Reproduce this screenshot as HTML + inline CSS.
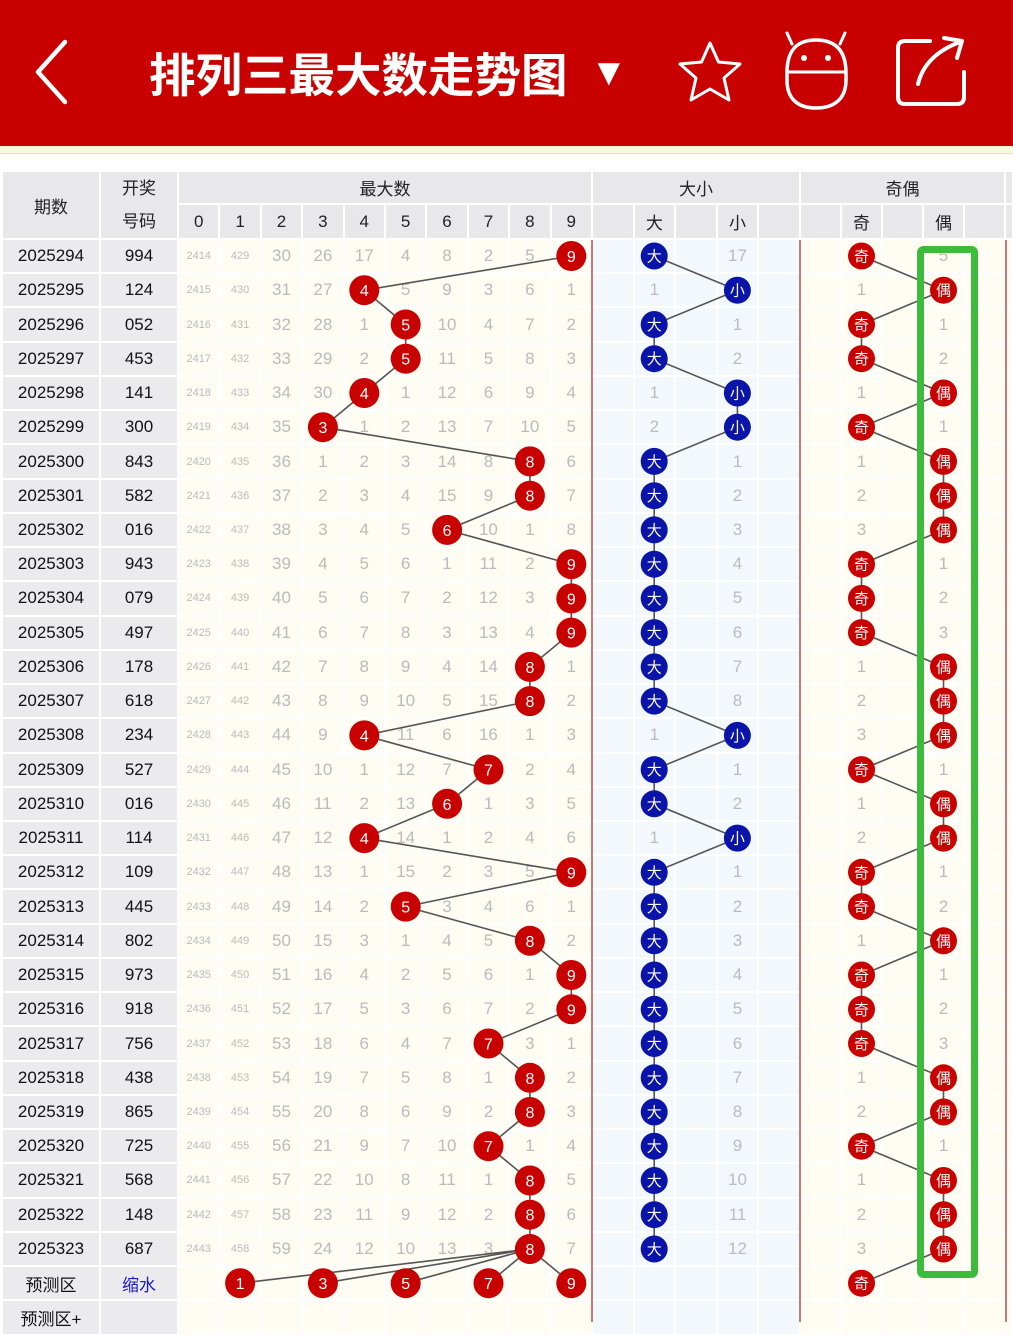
<!DOCTYPE html>
<html><head><meta charset="utf-8"><style>
*{margin:0;padding:0;box-sizing:border-box}
body{width:1013px;height:1322px;overflow:hidden;background:#fff;font-family:"Liberation Sans","Noto Sans CJK SC",sans-serif;position:relative}
#hd{position:absolute;left:0;top:0;width:1013px;height:146px;background:#c90000}
#st{position:absolute;left:0;top:146px;width:1013px;height:8px;background:#fdf6e2;border-bottom:1px solid #eadfc0}
#tt{position:absolute;left:149px;top:42px;color:#fff;font-size:46.5px;font-weight:bold;font-family:"Noto Sans CJK SC",sans-serif;line-height:62px;white-space:nowrap}
#tr{position:absolute;left:590px;top:48px;color:#fff;font-size:38px;line-height:50px}
table{position:absolute;left:3px;top:172px;border-collapse:separate;border-spacing:0;table-layout:fixed;width:1011px}
td,th{border-right:2px solid #fff;border-bottom:2px solid #fff;text-align:center;padding:0;color:#bbb;font-size:17px;font-weight:normal;overflow:hidden;white-space:nowrap}
th{background:#e8e8ea;color:#222;font-size:17px}
tr.h1{height:33px}tr.h2{height:35px}
tbody tr{height:34.24px}
td.p{color:#111;background:#ebebed}
td.s{font-size:11px}
.bl{color:#1a1ac0!important}
</style></head><body>
<div id="hd"></div><div id="st"></div>
<div id="tt">排列三最大数走势图</div><div id="tr">▼</div>
<svg style="position:absolute;left:0;top:0" width="1013" height="146">
<g fill="none" stroke="#fff" stroke-width="4.5" stroke-linecap="round" stroke-linejoin="round">
<polyline points="65,42 38,72 65,102"/>
<path d="M710,43 L718.5,62 L740,64 L724,78 L729,100 L710,89 L691,100 L696,78 L680,64 L701.5,62 Z" stroke-width="3"/>
<path d="M787,73 C787,50 797,40 816,40 C835,40 846,50 846,73 L846,80 C846,100 833,108 816,108 C799,108 787,100 787,80 Z" stroke-width="3.5"/>
<line x1="787" y1="72" x2="846" y2="72" stroke-width="3"/>
<line x1="792" y1="44" x2="787" y2="33" stroke-width="3"/><line x1="840" y1="44" x2="845" y2="33" stroke-width="3"/>
<path d="M930,41 L905,41 Q898,41 898,48 L898,97 Q898,104 905,104 L957,104 Q964,104 964,97 L964,72" stroke-width="4"/>
<path d="M918,84 Q925,55 960,42 M944,38 L962,41 L957,58" stroke-width="4"/>
</g>
<circle cx="804" cy="58" r="3" fill="#fff"/><circle cx="828" cy="58" r="3" fill="#fff"/>
</svg>
<table>
<colgroup><col style="width:98px"><col style="width:78px">
<col span="10" style="width:41.4px;background:#fefcf3">
<col span="5" style="width:41.6px;background:#f3f8fd">
<col span="5" style="width:41px;background:#fefcf3">
<col style="width:8px;background:#fefcf3"></colgroup>
<thead>
<tr class="h1"><th rowspan="2">期数</th><th rowspan="2" style="line-height:33px">开奖<br>号码</th><th colspan="10">最大数</th><th colspan="5">大小</th><th colspan="5">奇偶</th><th></th></tr>
<tr class="h2"><th>0</th><th>1</th><th>2</th><th>3</th><th>4</th><th>5</th><th>6</th><th>7</th><th>8</th><th>9</th><th></th><th>大</th><th></th><th>小</th><th></th><th></th><th>奇</th><th></th><th>偶</th><th></th><th></th></tr>
</thead><tbody>
<tr><td class=p>2025294<td class=p>994<td class=s>2414<td class=s>429<td>30<td>26<td>17<td>4<td>8<td>2<td>5<td><td><td><td><td>17<td><td><td><td><td>5<td><td>
<tr><td class=p>2025295<td class=p>124<td class=s>2415<td class=s>430<td>31<td>27<td><td>5<td>9<td>3<td>6<td>1<td><td>1<td><td><td><td><td>1<td><td><td><td>
<tr><td class=p>2025296<td class=p>052<td class=s>2416<td class=s>431<td>32<td>28<td>1<td><td>10<td>4<td>7<td>2<td><td><td><td>1<td><td><td><td><td>1<td><td>
<tr><td class=p>2025297<td class=p>453<td class=s>2417<td class=s>432<td>33<td>29<td>2<td><td>11<td>5<td>8<td>3<td><td><td><td>2<td><td><td><td><td>2<td><td>
<tr><td class=p>2025298<td class=p>141<td class=s>2418<td class=s>433<td>34<td>30<td><td>1<td>12<td>6<td>9<td>4<td><td>1<td><td><td><td><td>1<td><td><td><td>
<tr><td class=p>2025299<td class=p>300<td class=s>2419<td class=s>434<td>35<td><td>1<td>2<td>13<td>7<td>10<td>5<td><td>2<td><td><td><td><td><td><td>1<td><td>
<tr><td class=p>2025300<td class=p>843<td class=s>2420<td class=s>435<td>36<td>1<td>2<td>3<td>14<td>8<td><td>6<td><td><td><td>1<td><td><td>1<td><td><td><td>
<tr><td class=p>2025301<td class=p>582<td class=s>2421<td class=s>436<td>37<td>2<td>3<td>4<td>15<td>9<td><td>7<td><td><td><td>2<td><td><td>2<td><td><td><td>
<tr><td class=p>2025302<td class=p>016<td class=s>2422<td class=s>437<td>38<td>3<td>4<td>5<td><td>10<td>1<td>8<td><td><td><td>3<td><td><td>3<td><td><td><td>
<tr><td class=p>2025303<td class=p>943<td class=s>2423<td class=s>438<td>39<td>4<td>5<td>6<td>1<td>11<td>2<td><td><td><td><td>4<td><td><td><td><td>1<td><td>
<tr><td class=p>2025304<td class=p>079<td class=s>2424<td class=s>439<td>40<td>5<td>6<td>7<td>2<td>12<td>3<td><td><td><td><td>5<td><td><td><td><td>2<td><td>
<tr><td class=p>2025305<td class=p>497<td class=s>2425<td class=s>440<td>41<td>6<td>7<td>8<td>3<td>13<td>4<td><td><td><td><td>6<td><td><td><td><td>3<td><td>
<tr><td class=p>2025306<td class=p>178<td class=s>2426<td class=s>441<td>42<td>7<td>8<td>9<td>4<td>14<td><td>1<td><td><td><td>7<td><td><td>1<td><td><td><td>
<tr><td class=p>2025307<td class=p>618<td class=s>2427<td class=s>442<td>43<td>8<td>9<td>10<td>5<td>15<td><td>2<td><td><td><td>8<td><td><td>2<td><td><td><td>
<tr><td class=p>2025308<td class=p>234<td class=s>2428<td class=s>443<td>44<td>9<td><td>11<td>6<td>16<td>1<td>3<td><td>1<td><td><td><td><td>3<td><td><td><td>
<tr><td class=p>2025309<td class=p>527<td class=s>2429<td class=s>444<td>45<td>10<td>1<td>12<td>7<td><td>2<td>4<td><td><td><td>1<td><td><td><td><td>1<td><td>
<tr><td class=p>2025310<td class=p>016<td class=s>2430<td class=s>445<td>46<td>11<td>2<td>13<td><td>1<td>3<td>5<td><td><td><td>2<td><td><td>1<td><td><td><td>
<tr><td class=p>2025311<td class=p>114<td class=s>2431<td class=s>446<td>47<td>12<td><td>14<td>1<td>2<td>4<td>6<td><td>1<td><td><td><td><td>2<td><td><td><td>
<tr><td class=p>2025312<td class=p>109<td class=s>2432<td class=s>447<td>48<td>13<td>1<td>15<td>2<td>3<td>5<td><td><td><td><td>1<td><td><td><td><td>1<td><td>
<tr><td class=p>2025313<td class=p>445<td class=s>2433<td class=s>448<td>49<td>14<td>2<td><td>3<td>4<td>6<td>1<td><td><td><td>2<td><td><td><td><td>2<td><td>
<tr><td class=p>2025314<td class=p>802<td class=s>2434<td class=s>449<td>50<td>15<td>3<td>1<td>4<td>5<td><td>2<td><td><td><td>3<td><td><td>1<td><td><td><td>
<tr><td class=p>2025315<td class=p>973<td class=s>2435<td class=s>450<td>51<td>16<td>4<td>2<td>5<td>6<td>1<td><td><td><td><td>4<td><td><td><td><td>1<td><td>
<tr><td class=p>2025316<td class=p>918<td class=s>2436<td class=s>451<td>52<td>17<td>5<td>3<td>6<td>7<td>2<td><td><td><td><td>5<td><td><td><td><td>2<td><td>
<tr><td class=p>2025317<td class=p>756<td class=s>2437<td class=s>452<td>53<td>18<td>6<td>4<td>7<td><td>3<td>1<td><td><td><td>6<td><td><td><td><td>3<td><td>
<tr><td class=p>2025318<td class=p>438<td class=s>2438<td class=s>453<td>54<td>19<td>7<td>5<td>8<td>1<td><td>2<td><td><td><td>7<td><td><td>1<td><td><td><td>
<tr><td class=p>2025319<td class=p>865<td class=s>2439<td class=s>454<td>55<td>20<td>8<td>6<td>9<td>2<td><td>3<td><td><td><td>8<td><td><td>2<td><td><td><td>
<tr><td class=p>2025320<td class=p>725<td class=s>2440<td class=s>455<td>56<td>21<td>9<td>7<td>10<td><td>1<td>4<td><td><td><td>9<td><td><td><td><td>1<td><td>
<tr><td class=p>2025321<td class=p>568<td class=s>2441<td class=s>456<td>57<td>22<td>10<td>8<td>11<td>1<td><td>5<td><td><td><td>10<td><td><td>1<td><td><td><td>
<tr><td class=p>2025322<td class=p>148<td class=s>2442<td class=s>457<td>58<td>23<td>11<td>9<td>12<td>2<td><td>6<td><td><td><td>11<td><td><td>2<td><td><td><td>
<tr><td class=p>2025323<td class=p>687<td class=s>2443<td class=s>458<td>59<td>24<td>12<td>10<td>13<td>3<td><td>7<td><td><td><td>12<td><td><td>3<td><td><td><td>
<tr><td class=p>预测区<td class="p bl">缩水<td><td><td><td><td><td><td><td><td><td><td><td><td><td><td><td><td><td><td><td><td><td>
<tr><td class=p>预测区+<td class=p><td><td><td><td><td><td><td><td><td><td><td><td><td><td><td><td><td><td><td><td><td><td>
</tbody></table>
<svg style="position:absolute;left:0;top:0" width="1013" height="1322" font-family="Liberation Sans,Noto Sans CJK SC,sans-serif">
<g stroke="#a33" stroke-width="1.3"><line x1="592" y1="240" x2="592" y2="1322"/><line x1="800" y1="240" x2="800" y2="1322"/><line x1="1006" y1="240" x2="1006" y2="1322"/></g>
<g fill="none" stroke="#555" stroke-width="1.6">
<polyline points="571.3,256 364.3,290.2 405.7,324.5 405.7,358.7 364.3,393 322.9,427.2 529.9,461.4 529.9,495.7 447.1,529.9 571.3,564.2 571.3,598.4 571.3,632.6 529.9,666.9 529.9,701.1 364.3,735.4 488.5,769.6 447.1,803.8 364.3,838.1 571.3,872.3 405.7,906.6 529.9,940.8 571.3,975 571.3,1009.3 488.5,1043.5 529.9,1077.8 529.9,1112 488.5,1146.2 529.9,1180.5 529.9,1214.7 529.9,1249"/>
<path d="M529.9,1249 L240.1,1283.2 M529.9,1249 L322.9,1283.2 M529.9,1249 L405.7,1283.2 M529.9,1249 L488.5,1283.2 M529.9,1249 L571.3,1283.2"/>
<polyline points="654.2,256 737.4,290.2 654.2,324.5 654.2,358.7 737.4,393 737.4,427.2 654.2,461.4 654.2,495.7 654.2,529.9 654.2,564.2 654.2,598.4 654.2,632.6 654.2,666.9 654.2,701.1 737.4,735.4 654.2,769.6 654.2,803.8 737.4,838.1 654.2,872.3 654.2,906.6 654.2,940.8 654.2,975 654.2,1009.3 654.2,1043.5 654.2,1077.8 654.2,1112 654.2,1146.2 654.2,1180.5 654.2,1214.7 654.2,1249"/>
<polyline points="861.5,256 943.5,290.2 861.5,324.5 861.5,358.7 943.5,393 861.5,427.2 943.5,461.4 943.5,495.7 943.5,529.9 861.5,564.2 861.5,598.4 861.5,632.6 943.5,666.9 943.5,701.1 943.5,735.4 861.5,769.6 943.5,803.8 943.5,838.1 861.5,872.3 861.5,906.6 943.5,940.8 861.5,975 861.5,1009.3 861.5,1043.5 943.5,1077.8 943.5,1112 861.5,1146.2 943.5,1180.5 943.5,1214.7 943.5,1249 861.5,1283.2"/>
</g>
<g font-size="16" text-anchor="middle" fill="#fff">
<g>
<circle cx="571.3" cy="256" r="15" fill="#c80000"/><text x="571.3" y="262">9</text>
<circle cx="364.3" cy="290.2" r="15" fill="#c80000"/><text x="364.3" y="296.2">4</text>
<circle cx="405.7" cy="324.5" r="15" fill="#c80000"/><text x="405.7" y="330.5">5</text>
<circle cx="405.7" cy="358.7" r="15" fill="#c80000"/><text x="405.7" y="364.7">5</text>
<circle cx="364.3" cy="393" r="15" fill="#c80000"/><text x="364.3" y="399">4</text>
<circle cx="322.9" cy="427.2" r="15" fill="#c80000"/><text x="322.9" y="433.2">3</text>
<circle cx="529.9" cy="461.4" r="15" fill="#c80000"/><text x="529.9" y="467.4">8</text>
<circle cx="529.9" cy="495.7" r="15" fill="#c80000"/><text x="529.9" y="501.7">8</text>
<circle cx="447.1" cy="529.9" r="15" fill="#c80000"/><text x="447.1" y="535.9">6</text>
<circle cx="571.3" cy="564.2" r="15" fill="#c80000"/><text x="571.3" y="570.2">9</text>
<circle cx="571.3" cy="598.4" r="15" fill="#c80000"/><text x="571.3" y="604.4">9</text>
<circle cx="571.3" cy="632.6" r="15" fill="#c80000"/><text x="571.3" y="638.6">9</text>
<circle cx="529.9" cy="666.9" r="15" fill="#c80000"/><text x="529.9" y="672.9">8</text>
<circle cx="529.9" cy="701.1" r="15" fill="#c80000"/><text x="529.9" y="707.1">8</text>
<circle cx="364.3" cy="735.4" r="15" fill="#c80000"/><text x="364.3" y="741.4">4</text>
<circle cx="488.5" cy="769.6" r="15" fill="#c80000"/><text x="488.5" y="775.6">7</text>
<circle cx="447.1" cy="803.8" r="15" fill="#c80000"/><text x="447.1" y="809.8">6</text>
<circle cx="364.3" cy="838.1" r="15" fill="#c80000"/><text x="364.3" y="844.1">4</text>
<circle cx="571.3" cy="872.3" r="15" fill="#c80000"/><text x="571.3" y="878.3">9</text>
<circle cx="405.7" cy="906.6" r="15" fill="#c80000"/><text x="405.7" y="912.6">5</text>
<circle cx="529.9" cy="940.8" r="15" fill="#c80000"/><text x="529.9" y="946.8">8</text>
<circle cx="571.3" cy="975" r="15" fill="#c80000"/><text x="571.3" y="981">9</text>
<circle cx="571.3" cy="1009.3" r="15" fill="#c80000"/><text x="571.3" y="1015.3">9</text>
<circle cx="488.5" cy="1043.5" r="15" fill="#c80000"/><text x="488.5" y="1049.5">7</text>
<circle cx="529.9" cy="1077.8" r="15" fill="#c80000"/><text x="529.9" y="1083.8">8</text>
<circle cx="529.9" cy="1112" r="15" fill="#c80000"/><text x="529.9" y="1118">8</text>
<circle cx="488.5" cy="1146.2" r="15" fill="#c80000"/><text x="488.5" y="1152.2">7</text>
<circle cx="529.9" cy="1180.5" r="15" fill="#c80000"/><text x="529.9" y="1186.5">8</text>
<circle cx="529.9" cy="1214.7" r="15" fill="#c80000"/><text x="529.9" y="1220.7">8</text>
<circle cx="529.9" cy="1249" r="15" fill="#c80000"/><text x="529.9" y="1255">8</text>
<circle cx="240.1" cy="1283.2" r="15" fill="#c80000"/><text x="240.1" y="1289.2">1</text>
<circle cx="322.9" cy="1283.2" r="15" fill="#c80000"/><text x="322.9" y="1289.2">3</text>
<circle cx="405.7" cy="1283.2" r="15" fill="#c80000"/><text x="405.7" y="1289.2">5</text>
<circle cx="488.5" cy="1283.2" r="15" fill="#c80000"/><text x="488.5" y="1289.2">7</text>
<circle cx="571.3" cy="1283.2" r="15" fill="#c80000"/><text x="571.3" y="1289.2">9</text>
</g>
<g font-size="15">
<circle cx="654.2" cy="256" r="13.5" fill="#0a14a8"/><text x="654.2" y="261.5">大</text>
<circle cx="737.4" cy="290.2" r="13.5" fill="#0a14a8"/><text x="737.4" y="295.7">小</text>
<circle cx="654.2" cy="324.5" r="13.5" fill="#0a14a8"/><text x="654.2" y="330">大</text>
<circle cx="654.2" cy="358.7" r="13.5" fill="#0a14a8"/><text x="654.2" y="364.2">大</text>
<circle cx="737.4" cy="393" r="13.5" fill="#0a14a8"/><text x="737.4" y="398.5">小</text>
<circle cx="737.4" cy="427.2" r="13.5" fill="#0a14a8"/><text x="737.4" y="432.7">小</text>
<circle cx="654.2" cy="461.4" r="13.5" fill="#0a14a8"/><text x="654.2" y="466.9">大</text>
<circle cx="654.2" cy="495.7" r="13.5" fill="#0a14a8"/><text x="654.2" y="501.2">大</text>
<circle cx="654.2" cy="529.9" r="13.5" fill="#0a14a8"/><text x="654.2" y="535.4">大</text>
<circle cx="654.2" cy="564.2" r="13.5" fill="#0a14a8"/><text x="654.2" y="569.7">大</text>
<circle cx="654.2" cy="598.4" r="13.5" fill="#0a14a8"/><text x="654.2" y="603.9">大</text>
<circle cx="654.2" cy="632.6" r="13.5" fill="#0a14a8"/><text x="654.2" y="638.1">大</text>
<circle cx="654.2" cy="666.9" r="13.5" fill="#0a14a8"/><text x="654.2" y="672.4">大</text>
<circle cx="654.2" cy="701.1" r="13.5" fill="#0a14a8"/><text x="654.2" y="706.6">大</text>
<circle cx="737.4" cy="735.4" r="13.5" fill="#0a14a8"/><text x="737.4" y="740.9">小</text>
<circle cx="654.2" cy="769.6" r="13.5" fill="#0a14a8"/><text x="654.2" y="775.1">大</text>
<circle cx="654.2" cy="803.8" r="13.5" fill="#0a14a8"/><text x="654.2" y="809.3">大</text>
<circle cx="737.4" cy="838.1" r="13.5" fill="#0a14a8"/><text x="737.4" y="843.6">小</text>
<circle cx="654.2" cy="872.3" r="13.5" fill="#0a14a8"/><text x="654.2" y="877.8">大</text>
<circle cx="654.2" cy="906.6" r="13.5" fill="#0a14a8"/><text x="654.2" y="912.1">大</text>
<circle cx="654.2" cy="940.8" r="13.5" fill="#0a14a8"/><text x="654.2" y="946.3">大</text>
<circle cx="654.2" cy="975" r="13.5" fill="#0a14a8"/><text x="654.2" y="980.5">大</text>
<circle cx="654.2" cy="1009.3" r="13.5" fill="#0a14a8"/><text x="654.2" y="1014.8">大</text>
<circle cx="654.2" cy="1043.5" r="13.5" fill="#0a14a8"/><text x="654.2" y="1049">大</text>
<circle cx="654.2" cy="1077.8" r="13.5" fill="#0a14a8"/><text x="654.2" y="1083.3">大</text>
<circle cx="654.2" cy="1112" r="13.5" fill="#0a14a8"/><text x="654.2" y="1117.5">大</text>
<circle cx="654.2" cy="1146.2" r="13.5" fill="#0a14a8"/><text x="654.2" y="1151.7">大</text>
<circle cx="654.2" cy="1180.5" r="13.5" fill="#0a14a8"/><text x="654.2" y="1186">大</text>
<circle cx="654.2" cy="1214.7" r="13.5" fill="#0a14a8"/><text x="654.2" y="1220.2">大</text>
<circle cx="654.2" cy="1249" r="13.5" fill="#0a14a8"/><text x="654.2" y="1254.5">大</text>
</g>
<g font-size="15">
<circle cx="861.5" cy="256" r="13.5" fill="#c80000"/><text x="861.5" y="261.5">奇</text>
<circle cx="943.5" cy="290.2" r="13.5" fill="#c80000"/><text x="943.5" y="295.7">偶</text>
<circle cx="861.5" cy="324.5" r="13.5" fill="#c80000"/><text x="861.5" y="330">奇</text>
<circle cx="861.5" cy="358.7" r="13.5" fill="#c80000"/><text x="861.5" y="364.2">奇</text>
<circle cx="943.5" cy="393" r="13.5" fill="#c80000"/><text x="943.5" y="398.5">偶</text>
<circle cx="861.5" cy="427.2" r="13.5" fill="#c80000"/><text x="861.5" y="432.7">奇</text>
<circle cx="943.5" cy="461.4" r="13.5" fill="#c80000"/><text x="943.5" y="466.9">偶</text>
<circle cx="943.5" cy="495.7" r="13.5" fill="#c80000"/><text x="943.5" y="501.2">偶</text>
<circle cx="943.5" cy="529.9" r="13.5" fill="#c80000"/><text x="943.5" y="535.4">偶</text>
<circle cx="861.5" cy="564.2" r="13.5" fill="#c80000"/><text x="861.5" y="569.7">奇</text>
<circle cx="861.5" cy="598.4" r="13.5" fill="#c80000"/><text x="861.5" y="603.9">奇</text>
<circle cx="861.5" cy="632.6" r="13.5" fill="#c80000"/><text x="861.5" y="638.1">奇</text>
<circle cx="943.5" cy="666.9" r="13.5" fill="#c80000"/><text x="943.5" y="672.4">偶</text>
<circle cx="943.5" cy="701.1" r="13.5" fill="#c80000"/><text x="943.5" y="706.6">偶</text>
<circle cx="943.5" cy="735.4" r="13.5" fill="#c80000"/><text x="943.5" y="740.9">偶</text>
<circle cx="861.5" cy="769.6" r="13.5" fill="#c80000"/><text x="861.5" y="775.1">奇</text>
<circle cx="943.5" cy="803.8" r="13.5" fill="#c80000"/><text x="943.5" y="809.3">偶</text>
<circle cx="943.5" cy="838.1" r="13.5" fill="#c80000"/><text x="943.5" y="843.6">偶</text>
<circle cx="861.5" cy="872.3" r="13.5" fill="#c80000"/><text x="861.5" y="877.8">奇</text>
<circle cx="861.5" cy="906.6" r="13.5" fill="#c80000"/><text x="861.5" y="912.1">奇</text>
<circle cx="943.5" cy="940.8" r="13.5" fill="#c80000"/><text x="943.5" y="946.3">偶</text>
<circle cx="861.5" cy="975" r="13.5" fill="#c80000"/><text x="861.5" y="980.5">奇</text>
<circle cx="861.5" cy="1009.3" r="13.5" fill="#c80000"/><text x="861.5" y="1014.8">奇</text>
<circle cx="861.5" cy="1043.5" r="13.5" fill="#c80000"/><text x="861.5" y="1049">奇</text>
<circle cx="943.5" cy="1077.8" r="13.5" fill="#c80000"/><text x="943.5" y="1083.3">偶</text>
<circle cx="943.5" cy="1112" r="13.5" fill="#c80000"/><text x="943.5" y="1117.5">偶</text>
<circle cx="861.5" cy="1146.2" r="13.5" fill="#c80000"/><text x="861.5" y="1151.7">奇</text>
<circle cx="943.5" cy="1180.5" r="13.5" fill="#c80000"/><text x="943.5" y="1186">偶</text>
<circle cx="943.5" cy="1214.7" r="13.5" fill="#c80000"/><text x="943.5" y="1220.2">偶</text>
<circle cx="943.5" cy="1249" r="13.5" fill="#c80000"/><text x="943.5" y="1254.5">偶</text>
<circle cx="861.5" cy="1283.2" r="13.5" fill="#c80000"/><text x="861.5" y="1288.7">奇</text>
</g>
</g>
<rect x="920.5" y="249.5" width="54" height="1025" rx="3" fill="none" stroke="#3dbb3d" stroke-width="7"/>
</svg>
</body></html>
